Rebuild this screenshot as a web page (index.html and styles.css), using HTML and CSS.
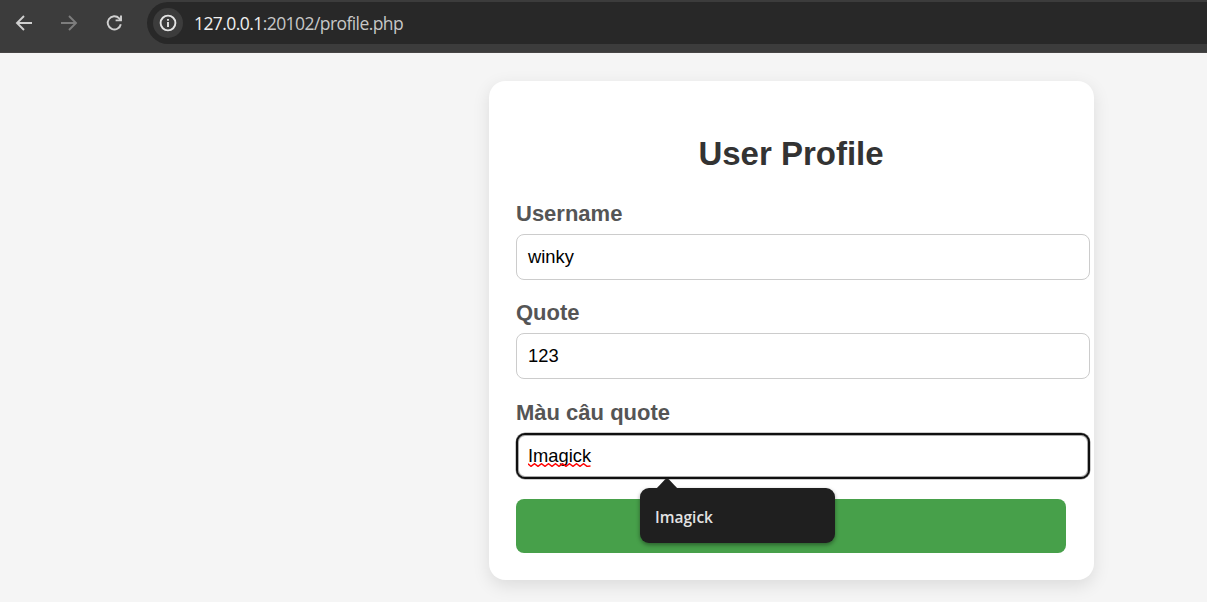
FILE: index.html
```html
<!DOCTYPE html>
<html lang="vi">
<head>
<meta charset="utf-8">
<title>User Profile</title>
<link rel="stylesheet" href="styles.css">
</head>
<body>
<header class="toolbar">
  <div class="nav">
    <svg class="icon" viewBox="0 0 20 20"><path d="M18 10H3.5M10 3L3 10L10 17"/></svg>
    <svg class="icon icon-off" viewBox="0 0 20 20"><path d="M2 10H16.5M10 3L17 10L10 17"/></svg>
    <svg class="icon" viewBox="0 0 20 20"><path d="M16.8 11.2A6.6 6.6 0 1 1 15.2 5.4L16.6 7"/><path d="M17 2.6V7.4H11.6"/></svg>
  </div>
  <div class="address">
    <span class="site-info"><svg class="icon" viewBox="0 0 20 20"><circle cx="10" cy="10" r="7.4"/><path d="M10 9V14M10 6V7.8"/></svg></span>
    <span class="url"><span class="host">127.0.0.1</span>:20102/profile.php</span>
  </div>
</header>
<main class="page">
  <form class="card">
    <h1 class="title">User Profile</h1>
    <div class="field">
      <div class="label">Username</div>
      <div class="input">winky</div>
    </div>
    <div class="field">
      <div class="label">Quote</div>
      <div class="input">123</div>
    </div>
    <div class="field field-last">
      <div class="label">Màu câu quote</div>
      <div class="input input-focus"><span class="misspelled">Imagick<svg class="squiggle" viewBox="0 0 63 4"><path d="M0 .7L3 3.4L6.5 .7L10 3.4L13.5 .7L17 3.4L20.5 .7L24 3.4L27.5 .7L31 3.4L34.5 .7L38 3.4L41.5 .7L45 3.4L48.5 .7L52 3.4L55.5 .7L59 3.4L62.5 3"/></svg></span></div>
      <div class="suggestions">
        <svg class="pointer" viewBox="0 0 22 11"><path d="M0 11L9 1.5Q11 -.5 13 1.5L22 11Z"/></svg>
        Imagick
      </div>
    </div>
    <div class="submit"></div>
  </form>
</main>
</body>
</html>
```
FILE: styles.css
```css
* { box-sizing: border-box; }

body {
  margin: 0;
  height: 602px;
  overflow: hidden;
  background: #f5f5f5;
  font-family: "Liberation Sans", Arial, sans-serif;
}

.toolbar {
  display: flex;
  height: 53px;
  padding: 2px 0 0 14px;
  background: #3c3c3c;
  border-bottom: 1px solid #474545;
}

.nav {
  display: flex;
  align-items: center;
  gap: 25px;
  width: 133px;
  height: 42px;
}

.icon {
  width: 20px;
  height: 20px;
  flex: none;
  fill: none;
  stroke: #d0d0d0;
  stroke-width: 1.9;
}

.icon-off { stroke: #7d7d7d; }

.address {
  display: flex;
  align-items: center;
  gap: 11px;
  flex: 1;
  height: 42px;
  padding-left: 6px;
  border-radius: 21px 0 0 21px;
  background: #282828;
}

.site-info {
  display: flex;
  align-items: center;
  justify-content: center;
  width: 30px;
  height: 30px;
  border-radius: 50%;
  background: #3c3c3c;
}

.site-info .icon { stroke: #e3e3e3; }

.url {
  font: 17.5px/24px "Open Sans", "Noto Sans", sans-serif;
  letter-spacing: -0.57px;
  color: #c7c7c7;
}

.host { color: #f0f0f0; }

.page {
  padding: 28px 0 0 489px;
}

.card {
  width: 605px;
  height: 499px;
  padding: 54px 28px 27px 27px;
  border-radius: 16.5px;
  background: #fff;
  box-shadow: 0 5.5px 16.5px rgba(0, 0, 0, .1);
}

.title {
  margin: 0 0 26px;
  font-size: 33px;
  line-height: 38px;
  text-align: center;
  color: #333;
}

.field {
  position: relative;
  height: 99px;
  padding-top: 1px;
}

.field + .field-last {
  height: 102px;
  padding-top: 2px;
}

.label {
  height: 34px;
  padding-top: 1px;
  line-height: 25px;
  font-size: 22px;
  font-weight: bold;
  color: #555;
}

.input {
  width: 574px;
  height: 46px;
  padding: 0 11px;
  line-height: 44px;
  font-size: 18.33px;
  color: #000;
  background: #fff;
  border: 1px solid #ccc;
  border-radius: 8px;
}

.input-focus {
  border: 2px solid #101010;
  padding: 0 10px;
  line-height: 42px;
  border-radius: 9px;
  box-shadow: 0 0 0 .5px #999, inset 0 0 0 1px #aaa;
}

.misspelled {
  position: relative;
  display: inline-block;
}

.squiggle {
  position: absolute;
  left: 0;
  top: 28px;
  width: 63px;
  height: 4px;
  fill: none;
  stroke: #f00;
  stroke-width: 1.4;
}

.suggestions {
  position: absolute;
  left: 124px;
  top: 91px;
  width: 195px;
  height: 55px;
  padding-left: 15px;
  border-radius: 9px;
  background: #1f1f1f;
  box-shadow: 0 2px 4px rgba(0, 0, 0, .4);
  font: 600 15.5px/58px "Open Sans", "Noto Sans", sans-serif;
  color: #e3e3e3;
}

.pointer {
  position: absolute;
  left: 16px;
  top: -10px;
  width: 22px;
  height: 11px;
  fill: #1f1f1f;
}

.submit {
  width: 550px;
  height: 54px;
  border-radius: 8px;
  background: #47a04a;
}
```
